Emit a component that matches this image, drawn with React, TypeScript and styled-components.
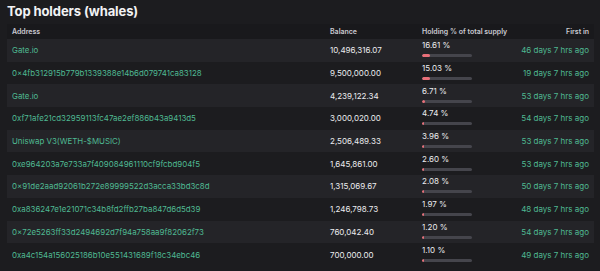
import React from 'react';
import styled, { createGlobalStyle } from 'styled-components';

const GlobalStyle = createGlobalStyle`
  html, body {
    margin: 0;
    padding: 0;
    background: #1c1c1f;
  }
  body {
    font-family: Inter, "Noto Sans", sans-serif;
    -webkit-font-smoothing: antialiased;
  }
`;

const Page = styled.div`
  width: 600px;
  height: 271px;
  background: #1c1c1f;
  padding: 3px 6px 0 7px;
  box-sizing: border-box;
  overflow: hidden;
`;

const Title = styled.h2`
  margin: 0;
  height: 21px;
  font-size: 13px;
  font-weight: 700;
  color: #f2f2f4;
  letter-spacing: -0.1px;
  line-height: 16px;
`;

const Table = styled.div`
  display: flex;
  flex-direction: column;
`;

const Row = styled.div<{ $shade: 'head' | 'light' | 'dark' }>`
  display: grid;
  grid-template-columns: 318px 92px 1fr auto;
  align-items: center;
  padding: 0 5px;
  height: ${p => (p.$shade === 'head' ? '15px' : '22.7px')};
  background: ${p =>
    p.$shade === 'head' ? '#19191c' : p.$shade === 'light' ? '#242428' : '#1c1c1f'};
`;

const HeadCell = styled.div<{ $right?: boolean }>`
  font-size: 7px;
  font-weight: 600;
  color: #c9c9d1;
  text-align: ${p => (p.$right ? 'right' : 'left')};
`;

const AddressCell = styled.div`
  font-size: 7.9px;
  color: #4fb992;
  white-space: nowrap;
`;

const BalanceCell = styled.div`
  font-size: 8px;
  color: #ececef;
`;

const HoldingCell = styled.div`
  display: flex;
  flex-direction: column;
  gap: 4px;
  padding-bottom: 2px;
`;

const Percent = styled.span`
  font-size: 8px;
  color: #ececef;
  line-height: 9px;
`;

const Track = styled.div`
  width: 50px;
  height: 3px;
  border-radius: 2px;
  background: #45454c;
  overflow: hidden;
`;

const Fill = styled.div`
  height: 100%;
  background: #e86f79;
  border-radius: 2px;
  min-width: 1.5px;
`;

const FirstIn = styled.div`
  font-size: 8px;
  color: #4fb992;
  text-align: right;
  white-space: nowrap;
`;

const holders = [
  { address: 'Gate.io', balance: '10,496,316.07', pct: 16.61, first: '46 days 7 hrs ago' },
  { address: '0×4fb312915b779b1339388e14b6d079741ca83128', balance: '9,500,000.00', pct: 15.03, first: '19 days 7 hrs ago' },
  { address: 'Gate.io', balance: '4,239,122.34', pct: 6.71, first: '53 days 7 hrs ago' },
  { address: '0xf71afe21cd32959113fc47ae2ef886b43a9413d5', balance: '3,000,020.00', pct: 4.74, first: '54 days 7 hrs ago' },
  { address: 'Uniswap V3(WETH-$MUSIC)', balance: '2,506,489.33', pct: 3.96, first: '53 days 7 hrs ago' },
  { address: '0xe964203a7e733a7f409084961110cf9fcbd904f5', balance: '1,645,861.00', pct: 2.6, first: '53 days 7 hrs ago' },
  { address: '0×91de2aad92061b272e89999522d3acca33bd3c8d', balance: '1,315,069.67', pct: 2.08, first: '50 days 7 hrs ago' },
  { address: '0xa836247e1e21071c34b8fd2ffb27ba847d6d5d39', balance: '1,246,798.73', pct: 1.97, first: '48 days 7 hrs ago' },
  { address: '0×72e5263ff33d2494692d7f94a758aa9f82062f73', balance: '760,042.40', pct: 1.2, first: '54 days 7 hrs ago' },
  { address: '0xa4c154a156025186b10e551431689f18c34ebc46', balance: '700,000.00', pct: 1.1, first: '49 days 7 hrs ago' },
];

export default function App() {
  return (
    <>
      <GlobalStyle />
      <Page>
        <Title>Top holders (whales)</Title>
        <Table>
          <Row $shade="head">
            <HeadCell>Address</HeadCell>
            <HeadCell>Balance</HeadCell>
            <HeadCell>Holding % of total supply</HeadCell>
            <HeadCell $right>First in</HeadCell>
          </Row>
          {holders.map((h, i) => (
            <Row key={i} $shade={i % 2 === 0 ? 'light' : 'dark'}>
              <AddressCell>{h.address}</AddressCell>
              <BalanceCell>{h.balance}</BalanceCell>
              <HoldingCell>
                <Percent>{h.pct.toFixed(2)} %</Percent>
                <Track>
                  <Fill style={{ width: `${h.pct}%` }} />
                </Track>
              </HoldingCell>
              <FirstIn>{h.first}</FirstIn>
            </Row>
          ))}
        </Table>
      </Page>
    </>
  );
}
